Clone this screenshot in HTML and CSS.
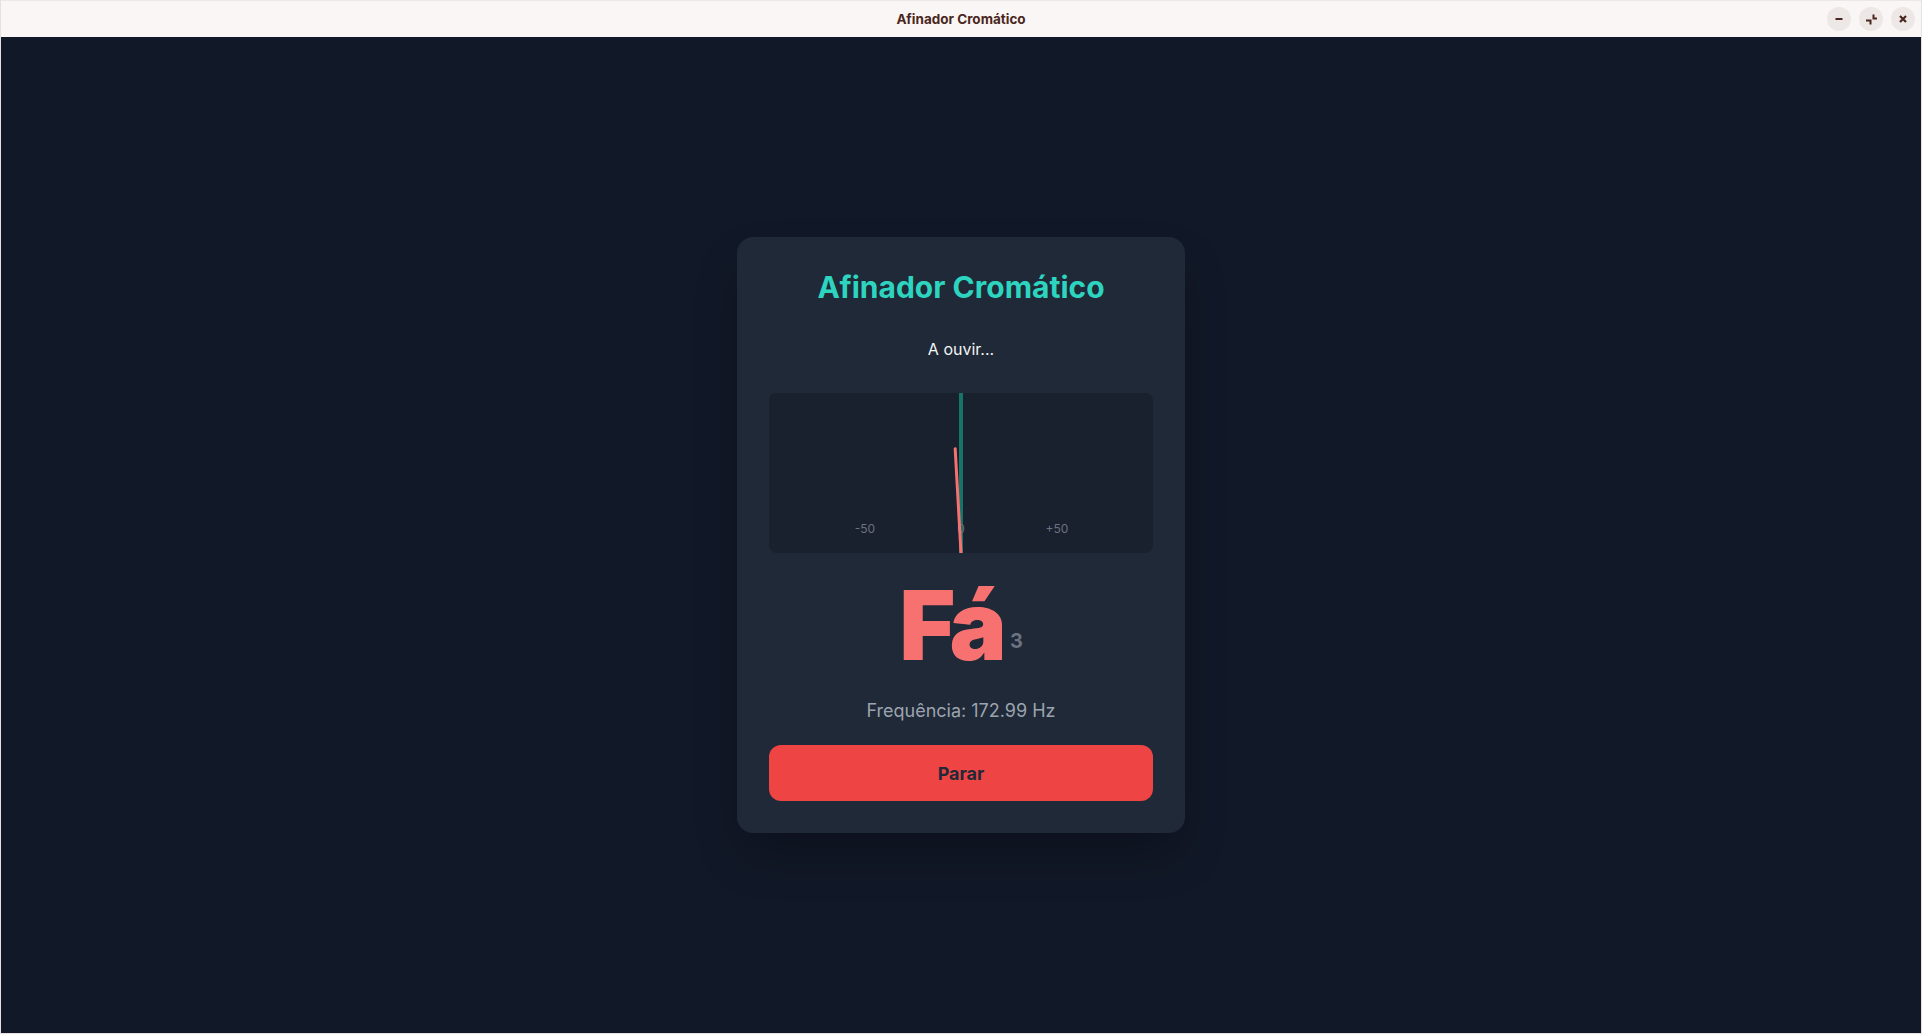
FILE: index.html
```html
<!DOCTYPE html>
<html lang="pt">
<head>
<meta charset="utf-8">
<title>Afinador Cromático</title>
<link rel="stylesheet" href="styles.css">
</head>
<body>
<div class="window">
  <header class="titlebar">
    <div class="titlebar-title">Afinador Cromático</div>
    <div class="titlebar-controls">
      <button class="wbtn" aria-label="Minimizar">
        <svg viewBox="0 0 16 16" width="16" height="16"><path d="M4.5 8h7" stroke="#4a2620" stroke-width="2" fill="none"/></svg>
      </button>
      <button class="wbtn" aria-label="Restaurar">
        <svg viewBox="0 0 16 16" width="16" height="16"><path d="M10.5 3.5v4h3.5M3 9.5h4.5v4" stroke="#4a2620" stroke-width="2" fill="none"/></svg>
      </button>
      <button class="wbtn" aria-label="Fechar">
        <svg viewBox="0 0 16 16" width="16" height="16"><path d="M5 5l6 6M11 5l-6 6" stroke="#4a2620" stroke-width="2.2" fill="none"/></svg>
      </button>
    </div>
  </header>
  <main class="content">
    <section class="card">
      <h1 class="card-title">Afinador Cromático</h1>
      <p class="status">A ouvir...</p>
      <div class="meter">
        <div class="meter-center"></div>
        <span class="meter-label label-left">-50</span>
        <span class="meter-label label-mid">0</span>
        <span class="meter-label label-right">+50</span>
        <div class="needle" style="transform: translateX(-50%) rotate(-3.2deg);"></div>
      </div>
      <div class="note">
        <span class="note-name">Fá</span>
        <span class="note-octave">3</span>
      </div>
      <p class="freq">Frequência: 172.99 Hz</p>
      <button class="stop-btn">Parar</button>
    </section>
  </main>
</div>
</body>
</html>
```

FILE: styles.css
```css
* { box-sizing: border-box; }
html, body { margin: 0; padding: 0; }
body {
  width: 1922px;
  height: 1034px;
  overflow: hidden;
  font-family: Inter, "Noto Sans", "Liberation Sans", sans-serif;
  background: #111827;
}
.window {
  width: 1922px;
  height: 1034px;
  display: flex;
  flex-direction: column;
  border-left: 1px solid #e6e1df;
  border-right: 1px solid #e6e1df;
  border-bottom: 1px solid #e6e1df;
}
.titlebar {
  height: 37px;
  flex: 0 0 37px;
  background: #faf6f5;
  border-top: 1px solid #ece8e7;
  position: relative;
  display: flex;
  align-items: center;
  justify-content: center;
}
.titlebar-title {
  font-family: Inter, "Noto Sans", sans-serif;
  font-weight: 700;
  font-size: 13.5px;
  color: #4a2620;
}
.titlebar-controls {
  position: absolute;
  right: 6px;
  top: 6px;
  display: flex;
  gap: 8px;
}
.wbtn {
  width: 24px;
  height: 24px;
  border-radius: 50%;
  border: none;
  padding: 0;
  background: #ede7e5;
  display: flex;
  align-items: center;
  justify-content: center;
}
.content {
  flex: 1;
  background: #111827;
  display: flex;
  align-items: center;
  justify-content: center;
}
.card {
  width: 448px;
  background: #1f2937;
  border-radius: 16px;
  padding: 32px;
  box-shadow: 0 25px 50px -12px rgba(0, 0, 0, 0.35);
  display: flex;
  flex-direction: column;
  align-items: stretch;
  text-align: center;
}
.card-title {
  margin: 0 0 32px;
  font-size: 30px;
  line-height: 36px;
  font-weight: 700;
  color: #2dd4bf;
}
.status {
  margin: 0 0 32px;
  font-size: 16px;
  line-height: 24px;
  color: #f3f4f6;
}
.meter {
  position: relative;
  height: 160px;
  background: #19202e;
  border-radius: 8px;
  overflow: hidden;
  margin-bottom: 24px;
}
.meter-center {
  position: absolute;
  left: 50%;
  top: 0;
  bottom: 0;
  width: 4px;
  transform: translateX(-50%);
  background: #167468;
}
.meter-label {
  position: absolute;
  bottom: 16px;
  font-size: 12px;
  line-height: 16px;
  color: #6b7280;
  transform: translateX(-50%);
}
.label-left { left: 25%; }
.label-mid { left: 50%; }
.label-right { left: 75%; }
.needle {
  position: absolute;
  left: 50%;
  bottom: 0;
  width: 3px;
  height: 106px;
  background: #f87171;
  border-radius: 2px 2px 0 0;
  transform-origin: 50% 100%;
}
.note {
  display: flex;
  justify-content: center;
  align-items: flex-end;
  margin-bottom: 24px;
}
.note-name {
  font-size: 96px;
  line-height: 96px;
  font-weight: 900;
  letter-spacing: -0.05em;
  color: #f87171;
}
.note-octave {
  font-size: 20px;
  line-height: 28px;
  font-weight: 700;
  color: #6b7280;
  margin-left: 8px;
  margin-bottom: 18px;
}
.freq {
  margin: 0 0 20px;
  font-size: 18px;
  line-height: 28px;
  color: #9ca3af;
}
.stop-btn {
  height: 56px;
  border: none;
  border-radius: 12px;
  background: #ef4444;
  color: #1f2937;
  font-family: Inter, "Noto Sans", sans-serif;
  font-size: 18px;
  font-weight: 700;
}
```
